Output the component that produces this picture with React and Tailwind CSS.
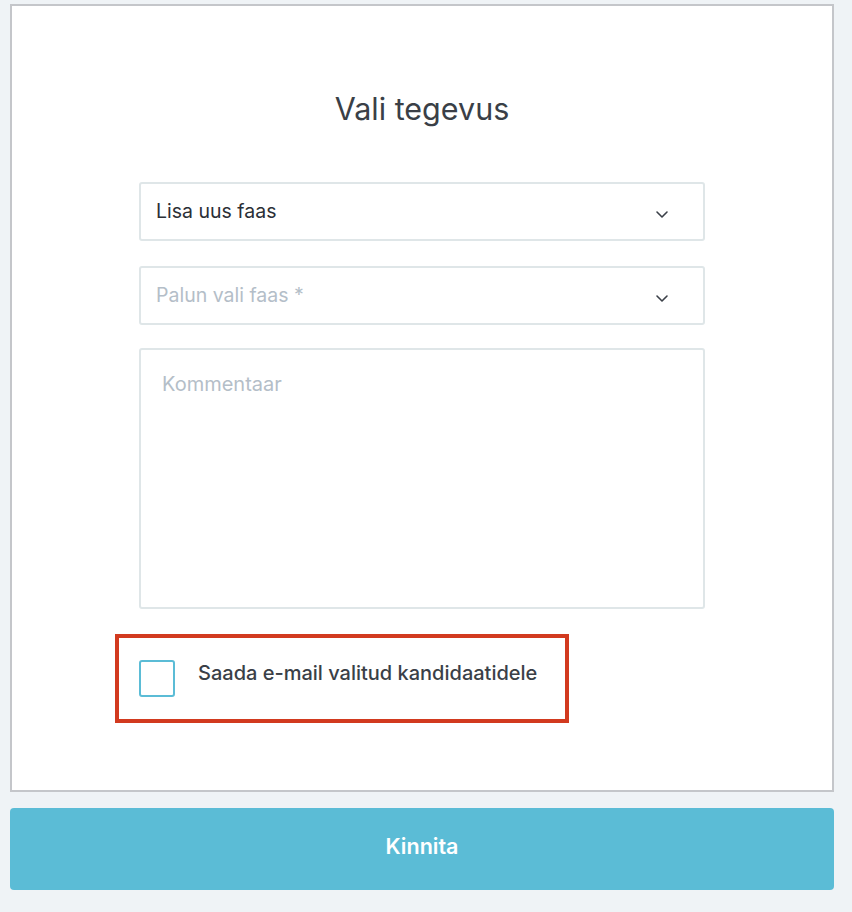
import { useState } from "react";

function Chevron() {
  return (
    <svg width="14" height="9" viewBox="0 0 14 9" fill="none" className="mt-[5px] text-[#3b4048]">
      <polyline points="2,2 7,7 12,2" stroke="currentColor" strokeWidth="1.6" strokeLinecap="round" strokeLinejoin="round" />
    </svg>
  );
}

function Select({ value, placeholder }) {
  return (
    <div className="flex h-[59px] w-full items-center justify-between rounded-[3px] border-2 border-[#dfe6e8] bg-white pl-[15px] pr-[34px]">
      {value ? (
        <span className="text-[19.5px] text-[#2b2f36]">{value}</span>
      ) : (
        <span className="text-[19.5px] text-[#b4bec8]">{placeholder}</span>
      )}
      <Chevron />
    </div>
  );
}

export default function App() {
  const [checked, setChecked] = useState(false);
  const [comment, setComment] = useState("");

  return (
    <div className="min-h-screen bg-[#eff3f6] px-[10px] pt-[4px] font-['Inter',sans-serif]">
      <div className="flex h-[788px] w-[824px] flex-col items-center border-2 border-[#c4c6ca] bg-white">
        <h1 className="mt-[84px] text-[30.5px] leading-[38px] text-[#3a3f47]">Vali tegevus</h1>

        <div className="mt-[54px] flex w-[566px] flex-col">
          <Select value="Lisa uus faas" />
          <div className="mt-[25px]">
            <Select placeholder="Palun vali faas *" />
          </div>
          <textarea
            value={comment}
            onChange={(e) => setComment(e.target.value)}
            placeholder="Kommentaar"
            className="mt-[23px] h-[261px] w-full resize-none rounded-[3px] border-2 border-[#dfe6e8] px-[21px] py-[19px] text-[20px] text-[#2b2f36] outline-none placeholder:text-[#b4bec8]"
          />

          <div className="-ml-[24px] mt-[25px] flex h-[89px] w-[454px] items-center border-4 border-[#d23a1f] pl-[20px]">
            <button
              type="button"
              onClick={() => setChecked((c) => !c)}
              className="h-[37px] w-[36px] shrink-0 rounded-[3px] border-2 border-[#5bbcd6] bg-white"
            >
              {checked && (
                <svg viewBox="0 0 24 24" className="mx-auto h-5 w-5 text-[#5bbcd6]" fill="none" stroke="currentColor" strokeWidth="3">
                  <polyline points="5,12 10,17 19,7" />
                </svg>
              )}
            </button>
            <span className="ml-[23px] -mt-[12px] text-[20px] font-medium text-[#3a3f47]">Saada e-mail valitud kandidaatidele</span>
          </div>
        </div>
      </div>

      <button
        type="button"
        className="mt-[16px] flex h-[82px] w-[824px] items-center justify-center rounded-[4px] bg-[#5bbcd6] pb-[5px] text-[21.5px] font-semibold text-white"
      >
        Kinnita
      </button>
    </div>
  );
}
